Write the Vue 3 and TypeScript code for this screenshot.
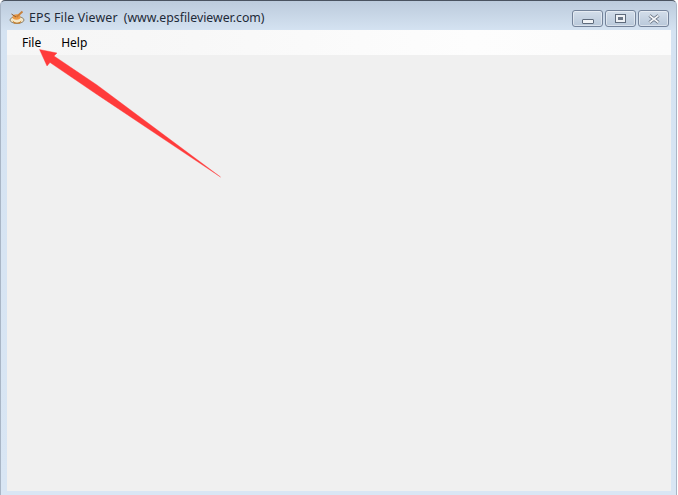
<script setup lang="ts">
const appName = 'EPS File Viewer'
const site = '(www.epsfileviewer.com)'
const menus: string[] = ['File', 'Help']
</script>

<template>
  <div class="window">
    <header class="titlebar">
      <svg class="app-icon" width="16" height="16" viewBox="0 0 16 16">
        <ellipse cx="8" cy="11" rx="7" ry="3.4" fill="#f4e7c8" stroke="#8a8270" stroke-width="1" />
        <path d="M3.5 11.5 Q8 16 12.5 11.5 L11 14.5 H5 Z" fill="#c9781c" />
        <ellipse cx="7.5" cy="8" rx="4" ry="2.8" fill="#ec9a45" />
        <path d="M7.5 8 L13.5 2.5" stroke="#c8803a" stroke-width="1.8" />
        <path d="M2.5 5 L7 8" stroke="#8a5a30" stroke-width="1" />
      </svg>
      <span class="title">
        <span class="app-name">{{ appName }}</span>
        <span class="site">{{ site }}</span>
      </span>
      <div class="controls">
        <button class="ctl" aria-label="Minimize">
          <span class="min-glyph"></span>
        </button>
        <button class="ctl" aria-label="Maximize">
          <span class="max-glyph"></span>
        </button>
        <button class="ctl" aria-label="Close">
          <svg width="14" height="10" viewBox="0 0 14 10">
            <path d="M2.5 1.5 L11.5 8.5 M11.5 1.5 L2.5 8.5" stroke="#5f6b7c" stroke-width="3.4" />
            <path d="M2.5 1.5 L11.5 8.5 M11.5 1.5 L2.5 8.5" stroke="#f2f4f7" stroke-width="1.6" />
          </svg>
        </button>
      </div>
    </header>
    <main class="client">
      <nav class="menubar">
        <span v-for="m in menus" :key="m" class="menu">{{ m }}</span>
      </nav>
      <div class="canvas"></div>
    </main>
    <svg class="arrow" width="678" height="495" viewBox="0 0 678 495">
      <polygon
        points="39.5,49.5 57,53 54,56 97,85 220.5,177 97,94.5 50,62.5 47,66"
        fill="#ff3b3b"
        stroke="#ff3b3b"
        stroke-width="0.4"
      />
    </svg>
  </div>
</template>

<style>
html, body { margin: 0; background: #fff; }
</style>

<style scoped>
.window {
  position: relative;
  box-sizing: border-box;
  width: 677px;
  height: 495px;
  display: flex;
  flex-direction: column;
  padding: 0 5px 4px 6px;
  border: 1px solid #a9b6c6;
  border-top-color: #4a5360;
  border-bottom: 0;
  border-radius: 5px 5px 0 0;
  background: linear-gradient(180deg, #bccbdc 0, #d5e3f2 30px, #d9e6f4 100%);
  font-family: "Noto Sans", "Open Sans", sans-serif;
  overflow: hidden;
}
.titlebar {
  height: 29px;
  flex: none;
  display: flex;
  align-items: center;
  padding-left: 2px;
  gap: 4px;
}
.app-icon { flex: none; margin-top: 3px; }
.title {
  display: flex;
  gap: 6px;
  font-size: 12.4px;
  color: #1e2a38;
  white-space: nowrap;
  margin-top: 3px;
}
.app-name { letter-spacing: 0.14px; }
.site { font-size: 12.3px; }
.controls {
  margin-left: auto;
  display: flex;
  gap: 2px;
  margin-right: 2px;
  align-self: flex-start;
  margin-top: 9px;
}
.ctl {
  width: 31px;
  height: 17px;
  padding: 0;
  box-sizing: border-box;
  display: flex;
  align-items: center;
  justify-content: center;
  border: 1px solid #74839a;
  border-radius: 3px;
  background: linear-gradient(180deg, #d3deea 0, #b9c8da 100%);
  box-shadow: inset 0 0 0 1px rgba(255,255,255,.45);
}
.min-glyph {
  width: 10px;
  height: 3px;
  margin-top: 5px;
  background: #f1f3f6;
  border: 1px solid #5f6b7c;
  border-radius: 1px;
}
.max-glyph {
  box-sizing: border-box;
  width: 11px;
  height: 9px;
  border: 1px solid #5f6b7c;
  background: #6b7686;
  box-shadow: inset 0 0 0 2px #eef1f5;
}
.client {
  flex: 1;
  min-height: 0;
  display: flex;
  flex-direction: column;
  background: #f0f0f0;
}
.menubar {
  height: 25px;
  flex: none;
  box-sizing: border-box;
  display: flex;
  align-items: center;
  gap: 20px;
  padding-left: 15px;
  background: linear-gradient(90deg, #f6f6f6 0, #f7f7f7 20%, #fdfdfd 70%, #fbfbfb 100%);
}
.menu {
  font-size: 12px;
  color: #000;
  margin-top: -1px;
}
.canvas { flex: 1; }
.arrow {
  position: absolute;
  left: -1px;
  top: -1px;
  pointer-events: none;
}
</style>
